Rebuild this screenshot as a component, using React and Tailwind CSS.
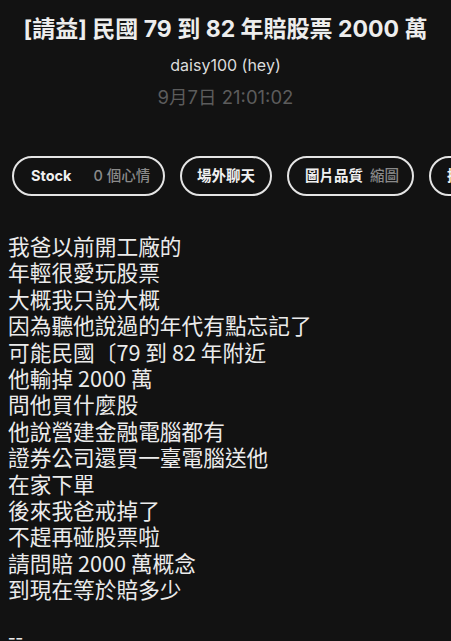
import React from "react";

const lines = [
  "我爸以前開工廠的",
  "年輕很愛玩股票",
  "大概我只說大概",
  "因為聽他說過的年代有點忘記了",
  "可能民國〔79 到 82 年附近",
  "他輸掉 2000 萬",
  "問他買什麼股",
  "他說營建金融電腦都有",
  "證券公司還買一臺電腦送他",
  "在家下單",
  "後來我爸戒掉了",
  "不趕再碰股票啦",
  "請問賠 2000 萬概念",
  "到現在等於賠多少",
];

const font = { fontFamily: '"Inter", "Noto Sans CJK TC", sans-serif' };
const bodyFont = { fontFamily: '"Noto Sans CJK TC", sans-serif' };

export default function App() {
  return (
    <div
      className="w-[451px] h-[641px] overflow-hidden bg-[#121212] text-[#ececec]"
      style={font}
    >
      <div className="flex flex-col items-center pt-[14px]">
        <div className="text-[23px] leading-[30px] font-bold text-[#ededed] whitespace-nowrap">
          [請益] 民國 79 到 82 年賠股票 2000 萬
        </div>
        <div className="mt-[11px] text-[16px] leading-[20px] text-[#dcdcdc]">
          daisy100 (hey)
        </div>
        <div className="mt-[11px] text-[18.5px] leading-[23px] text-[#5c5c5c]">
          9月7日 21:01:02
        </div>
      </div>

      <div className="mt-[47px] flex gap-[15px] pl-[12px] whitespace-nowrap overflow-hidden">
        <div className="shrink-0 h-[40px] w-[153px] rounded-full border-2 border-[#e4e4e4] flex items-center pl-[17px] text-[14.5px]">
          <span className="font-bold text-[#f0f0f0]">Stock</span>
          <span className="ml-[22px] font-medium text-[#8a8a8a]">0 個心情</span>
        </div>
        <div className="shrink-0 h-[40px] w-[92px] rounded-full border-2 border-[#e4e4e4] flex items-center justify-center text-[14.5px]">
          <span className="font-bold text-[#f0f0f0]">場外聊天</span>
        </div>
        <div className="shrink-0 h-[40px] w-[127px] rounded-full border-2 border-[#e4e4e4] flex items-center pl-[16px] text-[14.5px]">
          <span className="font-bold text-[#f0f0f0]">圖片品質</span>
          <span className="ml-[7px] font-medium text-[#8a8a8a]">縮圖</span>
        </div>
        <div className="shrink-0 h-[40px] w-[100px] rounded-full border-2 border-[#e4e4e4] flex items-center pl-[16px] text-[14.5px]">
          <span className="font-bold text-[#f0f0f0]">推文排序</span>
        </div>
      </div>

      <div
        className="mt-[37px] pl-[8px] text-[21.7px] leading-[26.4px] text-[#ebebeb]"
        style={bodyFont}
      >
        {lines.map((l, i) => (
          <div key={i} className="whitespace-nowrap">
            {l}
          </div>
        ))}
        <div className="h-[20px]" />
        <div>--</div>
      </div>
    </div>
  );
}
